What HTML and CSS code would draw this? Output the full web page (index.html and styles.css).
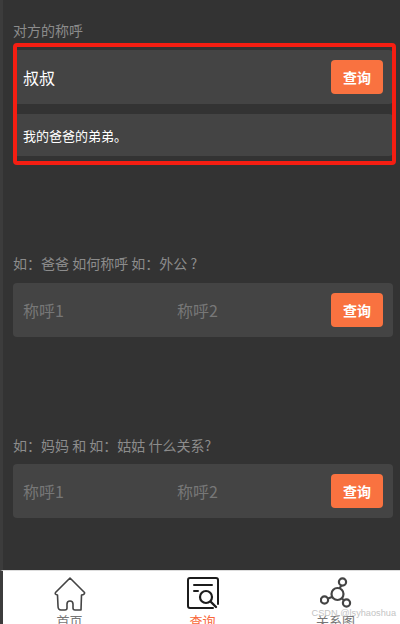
FILE: index.html
```html
<!DOCTYPE html>
<html lang="zh-CN">
<head>
    <meta charset="UTF-8">
    <meta name="viewport" content="width=device-width, initial-scale=1.0">
    <title>亲戚称呼查询</title>
    <link rel="stylesheet" href="styles.css">
</head>
<body>
<div class="page">
    <div class="content">
        <section class="block block-first">
            <div class="label">对方的称呼</div>
            <div class="card">
                <span class="name">叔叔</span>
                <button class="btn-query">查询</button>
            </div>
            <div class="card card-result">我的爸爸的弟弟。</div>
            <div class="highlight"></div>
        </section>

        <section class="block block-second">
            <div class="label">如：爸爸 如何称呼 如：外公 ?</div>
            <div class="card">
                <input type="text" class="field" placeholder="称呼1">
                <input type="text" class="field" placeholder="称呼2">
                <button class="btn-query">查询</button>
            </div>
        </section>

        <section class="block block-third">
            <div class="label">如：妈妈 和 如：姑姑 什么关系?</div>
            <div class="card">
                <input type="text" class="field" placeholder="称呼1">
                <input type="text" class="field" placeholder="称呼2">
                <button class="btn-query">查询</button>
            </div>
        </section>
    </div>

    <nav class="tabbar">
        <div class="tab">
            <svg class="tab-icon" viewBox="0 0 32 34" fill="none" stroke="#444" stroke-width="1.6" stroke-linejoin="round" stroke-linecap="round">
                <path d="M16 1 L1.5 15.5 Q0.5 17.5 3.5 18 L4 29 Q4 33 7 33 L11 33 Q13 33 13 31 L13 27 Q13 24 16 24 Q19 24 19 27 L19 31 Q19 33 21 33 L27 33 L27.5 18 Q31 17.5 30.5 15.5 Z"/>
            </svg>
            <span class="tab-text">首页</span>
        </div>
        <div class="tab tab-active">
            <svg class="tab-icon" viewBox="0 0 32 34" fill="none" stroke="#1c1c1c" stroke-linecap="round">
                <path stroke-width="2" d="M26 31 L3 31 Q1 31 1 29 L1 3 Q1 1 3 1 L29 1 Q31 1 31 3 L31 27"/>
                <path stroke-width="2" d="M7 8 L25 8 M7 14 L11 14"/>
                <circle cx="19" cy="20" r="6" stroke-width="2.2"/>
                <path stroke-width="2.4" d="M24 25 L29 30"/>
            </svg>
            <span class="tab-text">查询</span>
        </div>
        <div class="tab">
            <svg class="tab-icon" viewBox="0 0 32 34" fill="none" stroke="#444" stroke-width="2.2">
                <circle cx="17.5" cy="17" r="6"/>
                <circle cx="22.5" cy="5" r="3.6"/>
                <circle cx="4.5" cy="23" r="3.6"/>
                <circle cx="26.5" cy="26" r="3.6"/>
                <path d="M19.5 11.5 L21.3 8.5 M12 20 L8 21.5 M22 21.5 L24 23.5"/>
            </svg>
            <span class="tab-text">关系图</span>
        </div>
        <span class="watermark">CSDN @lsyhaoshua</span>
    </nav>
</div>
</body>
</html>
```

FILE: styles.css
```css
* {
    box-sizing: border-box;
}

html, body {
    margin: 0;
    height: 100%;
}

body {
    font-family: "Noto Sans CJK SC", "Liberation Sans", sans-serif;
    background-color: #333;
    overflow: hidden;
}

.page {
    height: 624px;
    display: flex;
    flex-direction: column;
    overflow: hidden;
}

.content {
    flex: 1;
    padding: 0 7px 0 10px;
    border-left: 3px solid #3c3c3c;
}

.block {
    position: relative;
}

.block-first {
    padding-top: 21px;
}

.block-second {
    padding-top: 98px;
}

.block-third {
    padding-top: 99px;
}

.label {
    font-size: 14px;
    line-height: 19px;
    color: #8c8c8c;
    margin-bottom: 10px;
}

.block-third .label {
    margin-bottom: 9px;
}

.card {
    display: flex;
    align-items: center;
    height: 54px;
    padding: 0 10px;
    background-color: #444;
    border-radius: 4px;
}

.card-result {
    height: 42px;
    margin-top: 10px;
    font-size: 13px;
    color: #fff;
}

.name {
    flex: 1;
    font-size: 16px;
    color: #fff;
}

.field {
    width: 154px;
    min-width: 0;
    padding: 0;
    border: none;
    outline: none;
    background: transparent;
    font-family: inherit;
    font-size: 16px;
    color: #fff;
}

.field::placeholder {
    color: #777;
}

.btn-query {
    width: 52px;
    height: 34px;
    margin-left: auto;
    padding: 0;
    border: none;
    border-radius: 4px;
    background-color: #f97240;
    color: #fff;
    font-family: inherit;
    font-size: 14px;
    font-weight: bold;
}

/* red annotation box drawn over the first result */
.highlight {
    position: absolute;
    left: 0;
    right: -3px;
    top: 43px;
    height: 122px;
    border: 4px solid #f51e12;
    border-radius: 4px;
}

.tabbar {
    position: relative;
    display: flex;
    flex-shrink: 0;
    height: 54px;
    padding-top: 6px;
    background-color: #fff;
    border-top: 1px solid #ddd;
    border-left: 3px solid #3c3c3c;
    overflow: hidden;
}

.tab {
    flex: 0 0 133px;
    display: flex;
    flex-direction: column;
    align-items: center;
}

.tab-icon {
    width: 32px;
    height: 34px;
    flex-shrink: 0;
    margin-bottom: 1px;
}

.tab-text {
    font-size: 13px;
    line-height: 18px;
    color: #777;
}

.tab-active .tab-text {
    color: #f9683a;
}

.watermark {
    position: absolute;
    right: 4px;
    top: 36px;
    font-family: "Liberation Sans", sans-serif;
    font-size: 9.2px;
    line-height: 12px;
    color: #c4c4c4;
}
```
